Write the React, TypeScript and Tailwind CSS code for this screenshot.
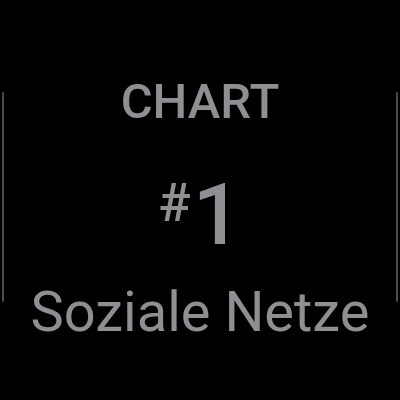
export default function App() {
  return (
    <div className="w-[400px] h-[400px] bg-black flex items-center justify-between overflow-hidden" style={{ fontFamily: 'Roboto, "Liberation Sans", sans-serif' }}>
      <div className="w-[2px] h-[210px] ml-[2px] mt-[-6px] bg-[#4a4a4c] rounded-full" />
      <div className="flex flex-col items-center text-[#8e8e93] mt-[16px]">
        <div className="text-[49px] font-medium leading-none">CHART</div>
        <div className="flex items-start mt-[46px] leading-none">
          <span className="text-[54px] font-medium mt-[4px] mr-[2px]">#</span>
          <span className="text-[86px] font-medium">1</span>
        </div>
        <div className="text-[56px] font-normal leading-none mt-[26px]">Soziale Netze</div>
      </div>
      <div className="w-[2px] h-[210px] mr-[2px] mt-[-6px] bg-[#4a4a4c] rounded-full" />
    </div>
  );
}
